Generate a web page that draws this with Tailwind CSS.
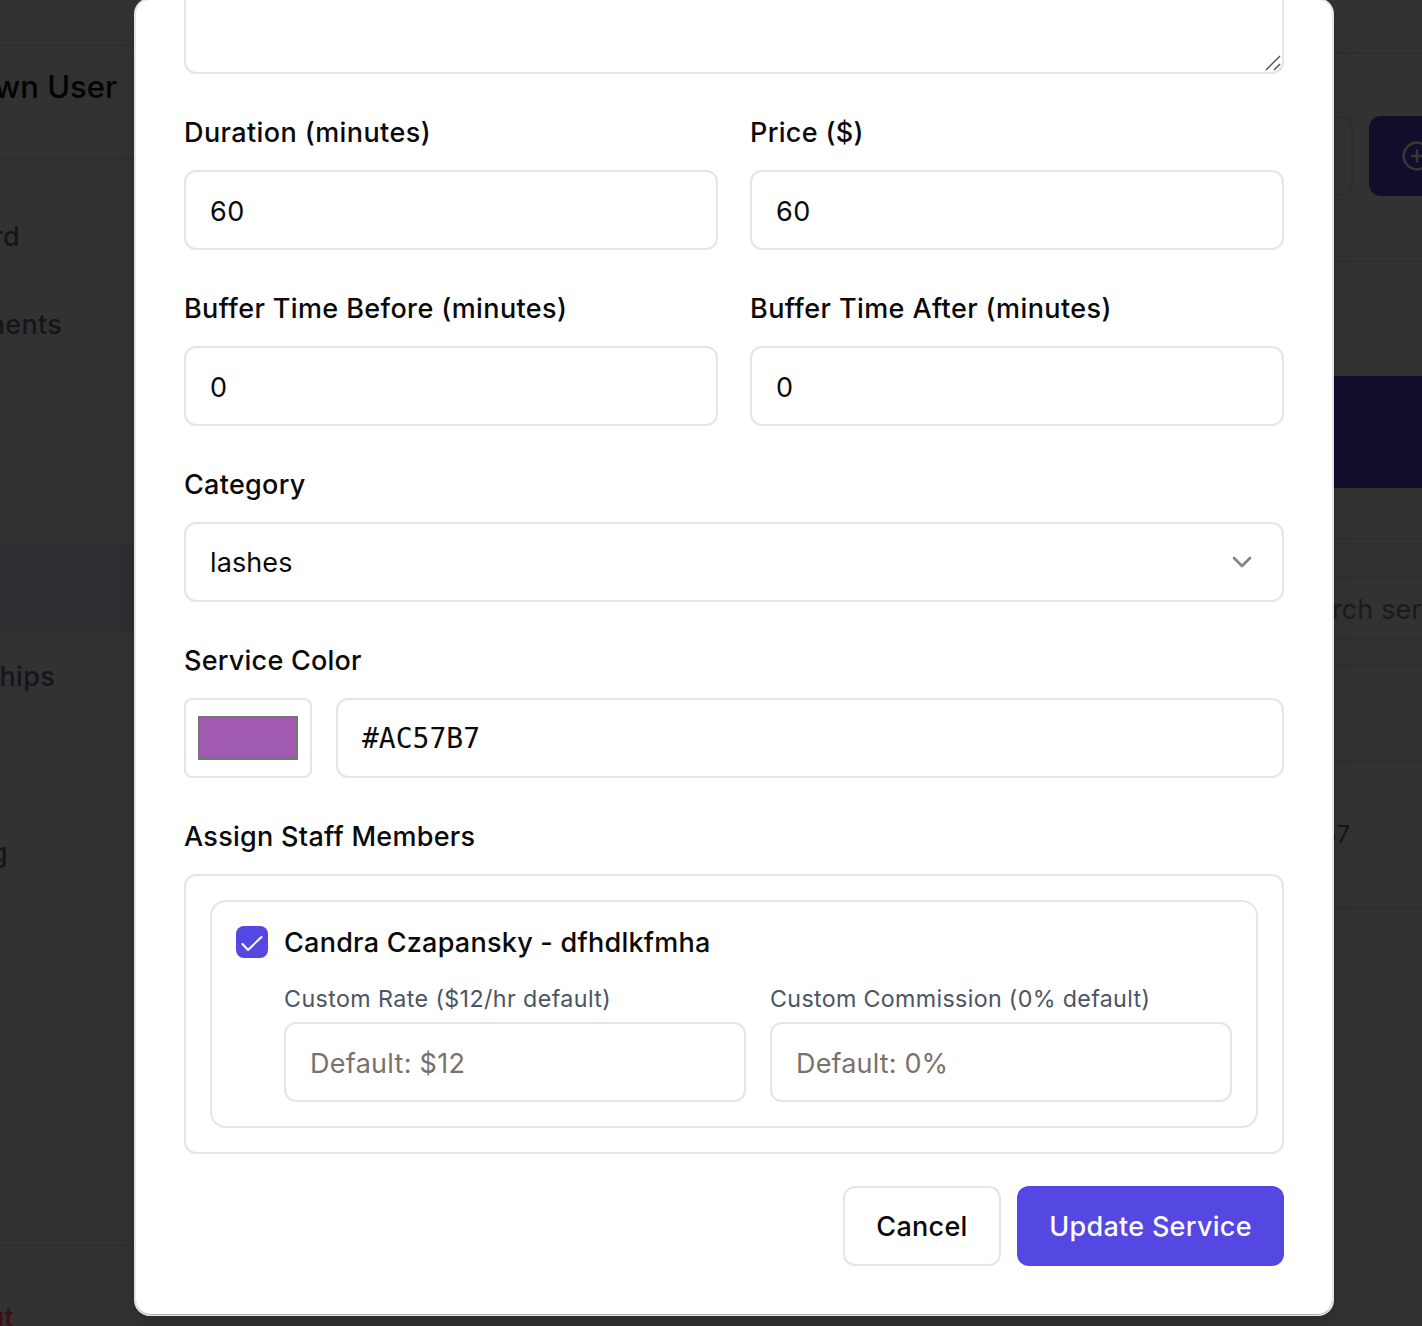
<!DOCTYPE html>
<html lang="en">
<head>
<meta charset="utf-8">
<title>Edit Service</title>
<script src="https://cdn.jsdelivr.net/npm/@tailwindcss/browser@4"></script>
</head>
<body class="relative h-[1326px] w-[1422px] overflow-hidden bg-[#323232] font-['Inter',sans-serif] text-[27px] leading-[42px] tracking-[0.28px] text-[#0a0a0a] [font-variation-settings:'opsz'_14]">
  <div class="flex h-full justify-between">
    <aside class="flex w-[136px] flex-col overflow-hidden whitespace-nowrap font-medium text-[#15161b]">
      <div class="h-[46px] shrink-0 border-b-2 border-[#2e2e2e]"></div>
      <div class="flex h-[114px] shrink-0 justify-end border-b-2 border-[#2e2e2e] pt-5 pr-[19px] text-[31px] tracking-normal text-[#030303]">wn User</div>
      <nav class="flex h-[1086px] shrink-0 flex-col border-b-2 border-[#2e2e2e] pt-8">
        <div class="flex h-[88px] w-5 items-center justify-end pt-0.5">rd</div>
        <div class="flex h-[88px] w-[62px] items-center justify-end pt-0.5">nents</div>
        <div class="h-[176px]"></div>
        <div class="h-[88px] bg-[#2f2e33]"></div>
        <div class="flex h-[88px] w-[55px] items-center justify-end pt-0.5">hips</div>
        <div class="h-[88px]"></div>
        <div class="flex h-[88px] w-2 items-center justify-end pt-0.5">g</div>
      </nav>
      <div class="flex w-[14px] shrink-0 justify-end pt-[51px] text-[#3d1012]">ut</div>
    </aside>
    <main class="flex w-[90px] flex-col overflow-hidden whitespace-nowrap">
      <div class="h-[54px] border-b-2 border-[#2e2e2e]"></div>
      <div class="flex h-[208px] gap-4 border-b-2 border-[#2e2e2e] pt-[62px]">
        <div class="h-20 w-[21px] shrink-0 rounded-r-xl border-2 border-l-0 border-[#2e2e2e]"></div>
        <div class="flex h-20 w-[200px] shrink-0 items-center rounded-xl bg-[#110d2b] pl-8">
          <svg class="size-8" viewBox="0 0 24 24" fill="none" stroke="#363636" stroke-width="2" stroke-linecap="round"><circle cx="12" cy="12" r="10"/><path d="M8 12h8M12 8v8"/></svg>
        </div>
      </div>
      <div class="h-[114px]"></div>
      <div class="h-28 bg-[#110d2b]"></div>
      <div class="h-[52px] border-b-2 border-[#2e2e2e]"></div>
      <div class="h-[38px] border-b-2 border-[#2e2e2e]"></div>
      <div class="flex h-[62px] items-center border-b-2 border-[#2e2e2e] pt-1 tracking-[0.1px] text-[#1a1a1a]">rch services</div>
      <div class="h-[26px] border-b-2 border-[#2e2e2e]"></div>
      <div class="h-[97px] border-b-2 border-[#2e2e2e]"></div>
      <div class="h-[146px] border-b-2 border-[#2e2e2e]">
        <div class="flex h-full w-[18px] items-center justify-end text-2xl tracking-normal text-[#15161b]">67</div>
      </div>
    </main>
  </div>

  <div role="dialog" class="absolute -top-0.5 left-[134px] flex h-[1318px] w-[1200px] flex-col rounded-2xl border-2 border-b border-[#e5e5e5] bg-white px-12 shadow-[inset_0_-1px_0_#b0b0b0,0_20px_30px_-6px_rgba(0,0,0,0.1),0_8px_12px_-8px_rgba(0,0,0,0.1)]">
    <div class="relative h-[74px] shrink-0 rounded-b-xl border-2 border-t-0 border-[#e5e5e5]">
      <svg class="absolute -right-px bottom-0 size-[18px]" viewBox="0 0 18 18" fill="none" stroke="#555" stroke-width="1.5"><path d="M1 16 15 2M9 16l6-6"/></svg>
    </div>

    <div class="mt-[38px] grid grid-cols-2 gap-x-8 gap-y-[38px]">
      <label class="flex flex-col gap-[18px] font-medium"><span class="h-10 tracking-[0.4px]">Duration (minutes)</span><span class="flex h-20 items-center rounded-xl border-2 border-[#e5e5e5] px-6 pt-1 font-normal tracking-[0.6px]">60</span></label>
      <label class="flex flex-col gap-[18px] font-medium"><span class="h-10 tracking-[0.32px]">Price ($)</span><span class="flex h-20 items-center rounded-xl border-2 border-[#e5e5e5] px-6 pt-1 font-normal tracking-[0.6px]">60</span></label>
      <label class="flex flex-col gap-[18px] font-medium"><span class="h-10 tracking-[0.38px]">Buffer Time Before (minutes)</span><span class="flex h-20 items-center rounded-xl border-2 border-[#e5e5e5] px-6 pt-1 font-normal">0</span></label>
      <label class="flex flex-col gap-[18px] font-medium"><span class="h-10 tracking-[0.4px]">Buffer Time After (minutes)</span><span class="flex h-20 items-center rounded-xl border-2 border-[#e5e5e5] px-6 pt-1 font-normal">0</span></label>
    </div>

    <div class="mt-[38px] flex flex-col gap-[18px]">
      <div class="h-10 font-medium">Category</div>
      <div class="flex h-20 items-center justify-between rounded-xl border-2 border-[#e5e5e5] pr-6 pl-6">
        <span class="pt-0.5 tracking-[0.1px]">lashes</span>
        <svg class="size-8" viewBox="0 0 24 24" fill="none" stroke="#858585" stroke-width="2" stroke-linecap="round" stroke-linejoin="round"><path d="m6 9 6 6 6-6"/></svg>
      </div>
    </div>

    <div class="mt-[38px] flex flex-col gap-[18px]">
      <div class="h-10 font-medium tracking-[0.22px]">Service Color</div>
      <div class="flex gap-6">
        <div class="flex h-20 w-32 items-center justify-center rounded-lg border-2 border-[#e5e5e5]"><div class="h-11 w-[100px] border-2 border-[#767676] bg-[#a05ab0]"></div></div>
        <div class="flex h-20 flex-1 items-center rounded-xl border-2 border-[#e5e5e5] px-6 pt-0.5 font-['DejaVu_Sans_Mono',monospace] text-[28px] tracking-normal">#AC57B7</div>
      </div>
    </div>

    <div class="mt-[38px] flex flex-col gap-[18px]">
      <div class="h-10 font-medium">Assign Staff Members</div>
      <div class="h-[280px] rounded-xl border-2 border-[#e5e5e5] p-6">
        <div class="h-[228px] rounded-2xl border-2 border-[#e5e5e5] px-6 pt-5">
          <div class="flex h-10 items-center gap-4 font-medium">
            <span class="flex size-8 items-center justify-center rounded-lg bg-[#5547e1]"><svg class="size-8" viewBox="0 0 32 32" fill="none" stroke="#fff" stroke-width="2" stroke-linecap="round" stroke-linejoin="round"><path d="m6.500 18 5.500 6L25.500 11"/></svg></span>
            <span class="pt-0.5 tracking-[0.25px]">Candra Czapansky - dfhdlkfmha</span>
          </div>
          <div class="mt-5 grid grid-cols-2 gap-6 pl-12">
            <div><div class="h-10 pt-px text-[23.25px] leading-8 tracking-[0.4px] text-[#4b5563]">Custom Rate ($12/hr default)</div><div class="flex h-20 items-center rounded-xl border-2 border-[#e5e5e5] px-6 pt-1 text-[#78716c]">Default: $12</div></div>
            <div><div class="h-10 pt-px text-[23.25px] leading-8 tracking-[0.33px] text-[#4b5563]">Custom Commission (0% default)</div><div class="flex h-20 items-center rounded-xl border-2 border-[#e5e5e5] px-6 pt-1 tracking-[0.15px] text-[#78716c]">Default: 0%</div></div>
          </div>
        </div>
      </div>
    </div>

    <div class="mt-8 flex justify-end gap-4 font-medium">
      <button class="h-20 w-[158px] rounded-xl border-2 border-[#e5e5e5] pt-0.5">Cancel</button>
      <button class="h-20 w-[267px] rounded-xl bg-[#5547e1] pt-0.5 text-[#fafafa]">Update Service</button>
    </div>
  </div>
</body>
</html>
